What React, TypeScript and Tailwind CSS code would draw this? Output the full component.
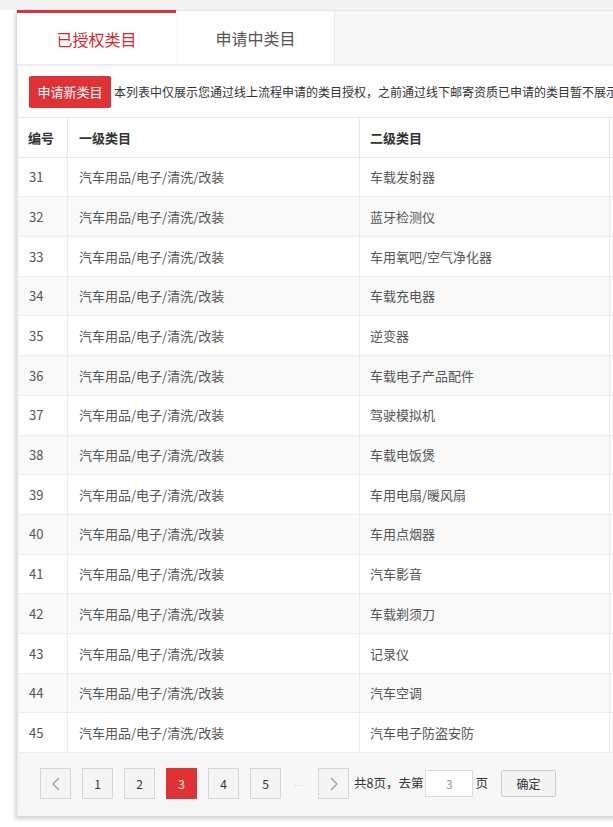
const rows: [number, string][] = [
  [31, "车载发射器"],
  [32, "蓝牙检测仪"],
  [33, "车用氧吧/空气净化器"],
  [34, "车载充电器"],
  [35, "逆变器"],
  [36, "车载电子产品配件"],
  [37, "驾驶模拟机"],
  [38, "车载电饭煲"],
  [39, "车用电扇/暖风扇"],
  [40, "车用点烟器"],
  [41, "汽车影音"],
  [42, "车载剃须刀"],
  [43, "记录仪"],
  [44, "汽车空调"],
  [45, "汽车电子防盗安防"],
];

const Chevron = ({ dir }: { dir: "left" | "right" }) => (
  <svg width="8" height="14" viewBox="0 0 8 14" fill="none">
    <path
      d={dir === "left" ? "M7 1 L1 7 L7 13" : "M1 1 L7 7 L1 13"}
      stroke="#999"
      strokeWidth="1.2"
    />
  </svg>
);

const PageBox = ({ children, active }: { children: React.ReactNode; active?: boolean }) => (
  <div
    className={
      active
        ? "w-[31px] h-[31px] flex items-center justify-center bg-[#e03234] border border-[#e03234] text-white text-[12px]"
        : "w-[31px] h-[31px] flex items-center justify-center bg-[#f5f5f5] border border-[#d5d5d5] text-[#333] text-[12px]"
    }
  >
    {children}
  </div>
);

export default function App() {
  return (
    <div
      className="w-[613px] h-[827px] bg-white overflow-hidden"
      style={{ fontFamily: '"Microsoft YaHei", "Noto Sans CJK SC", "Noto Sans", sans-serif' }}
    >
      {/* top band */}
      <div className="h-[10px] bg-[#f3f3f3]" />

      <div className="ml-[17px] w-[640px] shadow-[-2px_3px_4px_rgba(0,0,0,0.18)]">
        {/* Tabs */}
        <div className="h-[56px] flex bg-[#f7f7f7] border-t border-[#e6e6e6] border-b-2 border-b-[#eeeeee]">
          <div className="w-[159px] bg-white border-t-[3px] border-[#e03234] flex items-center justify-center text-[16px] text-[#d9262c] -mt-px">
            已授权类目
          </div>
          <div className="w-[158px] ml-px bg-white border-r border-[#eaeaea] flex items-center justify-center text-[16px] text-[#555]">
            申请中类目
          </div>
        </div>

        {/* Content */}
        <div className="border-l-2 border-[#efefef] bg-white">
          <div className="flex items-center pl-[10px] pt-[10px] pb-[9px]">
            <button className="w-[82px] h-[32px] rounded-[2px] bg-[#e03234] text-white text-[13px] shrink-0">
              申请新类目
            </button>
            <span className="ml-[3px] text-[12px] text-[#333] whitespace-nowrap">
              本列表中仅展示您通过线上流程申请的类目授权，之前通过线下邮寄资质已申请的类目暂不展示
            </span>
          </div>

          {/* Table */}
          <div className="border-t border-[#e8e8e8] text-[13px]">
            <div className="flex h-[39.7px] border-b border-[#e8e8e8] font-bold text-[#333]">
              <div className="w-[49px] pl-[9px] flex items-center border-r border-[#e8e8e8]">编号</div>
              <div className="w-[292px] pl-[11px] flex items-center border-r border-[#e8e8e8]">一级类目</div>
              <div className="w-[250px] pl-[10px] flex items-center border-r border-[#e8e8e8]">二级类目</div>
              <div className="flex-1" />
            </div>
            {rows.map(([id, name], i) => (
              <div
                key={id}
                className={`flex h-[39.7px] border-b border-[#ececec] text-[#555] ${i % 2 === 1 ? "bg-[#f9f9f9]" : "bg-white"}`}
              >
                <div className="w-[49px] pl-[10px] flex items-center border-r border-[#ececec]">{id}</div>
                <div className="w-[292px] pl-[11px] flex items-center border-r border-[#ececec]">汽车用品/电子/清洗/改装</div>
                <div className="w-[250px] pl-[10px] flex items-center border-r border-[#ececec]">{name}</div>
                <div className="flex-1" />
              </div>
            ))}
          </div>

          {/* Pagination */}
          <div className="h-[63px] bg-[#f7f7f7] flex items-start pt-[15px] pl-[21px]">
            <div className="flex items-center gap-[11px]">
              <PageBox><Chevron dir="left" /></PageBox>
              <PageBox>1</PageBox>
              <PageBox>2</PageBox>
              <PageBox active>3</PageBox>
              <PageBox>4</PageBox>
              <PageBox>5</PageBox>
              <span
                className="w-[15px] text-center text-[#c4c4c4] text-[9px] leading-none tracking-[1px] overflow-hidden"
                style={{ fontFamily: '"Liberation Sans", Arial, sans-serif' }}
              >
                ...
              </span>
              <PageBox><Chevron dir="right" /></PageBox>
            </div>
            <div className="flex items-center ml-[5px] h-[31px] text-[12.5px] text-[#333]">
              <span>共8页，去第</span>
              <div className="ml-[2px] w-[48px] h-[27px] bg-white border border-[#ddd] flex items-center justify-center text-[#999] text-[12px]">
                3
              </div>
              <span className="ml-[2px]">页</span>
              <button className="ml-[13px] w-[55px] h-[27px] bg-[#f3f3f3] border border-[#ccc] rounded-[2px] text-[12px] text-[#333]">
                确定
              </button>
            </div>
          </div>
        </div>
      </div>
    </div>
  );
}
